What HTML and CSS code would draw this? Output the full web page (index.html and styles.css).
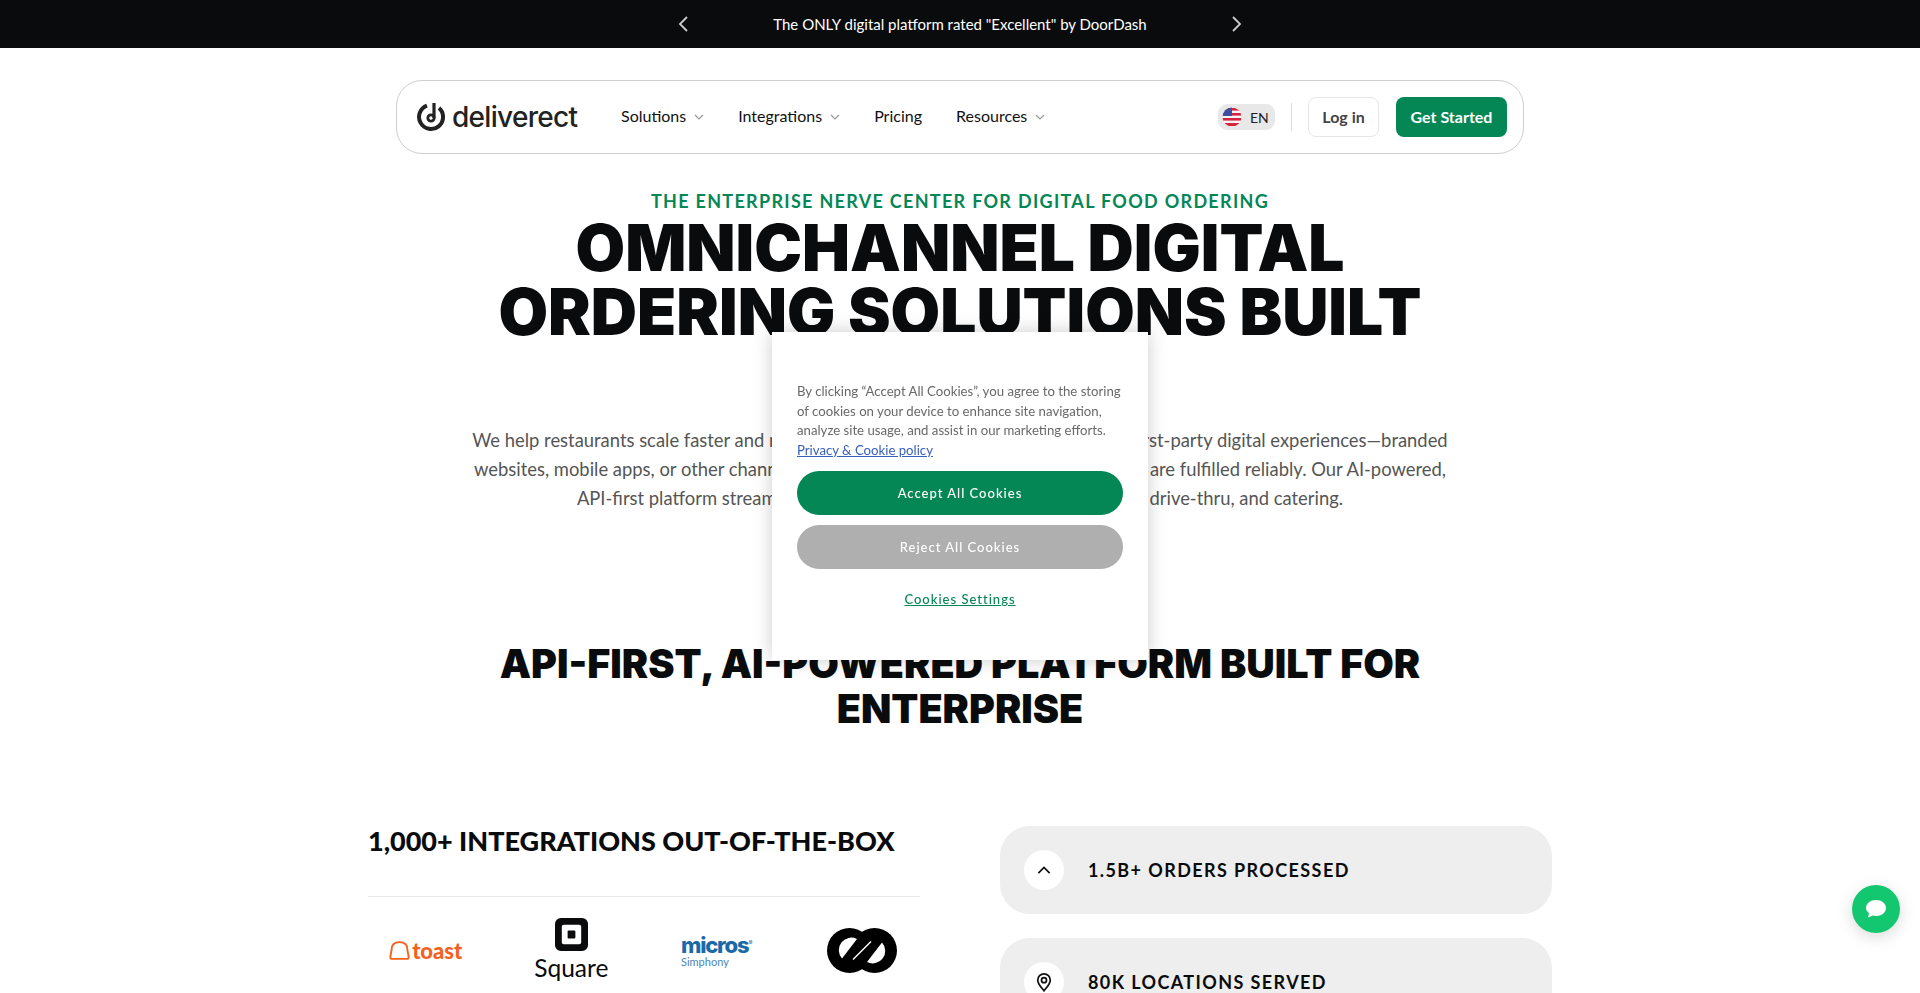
FILE: index.html
```html
<!DOCTYPE html>
<html lang="en">
<head>
    <meta charset="UTF-8">
    <meta name="viewport" content="width=device-width, initial-scale=1.0">
    <title>Deliverect</title>
    <link rel="stylesheet" href="styles.css">
</head>
<body>
    <div class="promo-bar">
        <svg class="promo-arrow" viewBox="0 0 12 16"><path d="M10 1L3 8l7 7"/></svg>
        <p class="promo-text">The ONLY digital platform rated "Excellent" by DoorDash</p>
        <svg class="promo-arrow" viewBox="0 0 12 16"><path d="M2 1l7 7-7 7"/></svg>
    </div>

    <div class="navbar">
        <a class="logo">
            <svg class="logo-mark" viewBox="0 0 28 30"><path class="logo-ring" d="M10 3.700A12 12 0 1 0 22 6"/><path class="logo-stem" d="M17 1v15"/><circle class="logo-dot" cx="14" cy="16" r="3.200"/></svg>
            <span class="logo-text">deliverect</span>
        </a>
        <div class="nav-links">
            <a class="nav-link">Solutions <svg class="caret" viewBox="0 0 10 6"><path d="M1 1l4 4 4-4"/></svg></a>
            <a class="nav-link">Integrations <svg class="caret" viewBox="0 0 10 6"><path d="M1 1l4 4 4-4"/></svg></a>
            <a class="nav-link">Pricing</a>
            <a class="nav-link">Resources <svg class="caret" viewBox="0 0 10 6"><path d="M1 1l4 4 4-4"/></svg></a>
        </div>
        <div class="nav-right">
            <div class="lang">
                <svg class="flag" viewBox="0 0 20 20">
                    <clipPath id="flag-clip"><circle cx="10" cy="10" r="9.500"/></clipPath>
                    <g clip-path="url(#flag-clip)">
                        <rect width="20" height="20" fill="#f4f4f4"/>
                        <rect y="1" width="20" height="2.600" fill="#d8233f"/>
                        <rect y="6" width="20" height="2.600" fill="#d8233f"/>
                        <rect y="11" width="20" height="2.600" fill="#d8233f"/>
                        <rect y="16" width="20" height="3" fill="#d8233f"/>
                        <rect width="10" height="9" fill="#3c4fa0"/>
                    </g>
                </svg>
                <span>EN</span>
            </div>
            <div class="nav-divider"></div>
            <a class="btn-login">Log in</a>
            <a class="btn-start">Get Started</a>
        </div>
    </div>

    <div class="hero">
        <p class="eyebrow">The enterprise nerve center for digital food ordering</p>
        <h1>OMNICHANNEL DIGITAL<br>ORDERING SOLUTIONS BUILT</h1>
        <p class="hero-copy">We help restaurants scale faster and maximize their margins by owning all of their first-party digital experiences—branded<br>websites, mobile apps, or other channels—while making sure that all of those orders are fulfilled reliably. Our AI-powered,<br>API-first platform streamlines every channel, from deliveries to dine-in, drive-thru, and catering.</p>
    </div>

    <h2 class="section-title">API-FIRST, AI-POWERED PLATFORM BUILT FOR<br>ENTERPRISE</h2>

    <div class="columns">
        <div>
            <h3 class="col-title">1,000+ INTEGRATIONS OUT-OF-THE-BOX</h3>
            <div class="partners">
                <div class="partner toast">
                    <svg class="toast-mark" viewBox="0 0 20 18"><path d="M3 17h14c1.500 0 2-1.200 1.700-2.300L17.500 8.500C18 4 15 1 10 1S2 4 2.500 8.500L1.300 14.700C1 15.800 1.500 17 3 17z"/></svg>
                    <span>toast</span>
                </div>
                <div class="partner square">
                    <svg class="square-mark" viewBox="0 0 34 34"><path fill-rule="evenodd" d="M6 0h22a6 6 0 0 1 6 6v22a6 6 0 0 1-6 6H6a6 6 0 0 1-6-6V6a6 6 0 0 1 6-6zM9 7a2 2 0 0 0-2 2v16a2 2 0 0 0 2 2h16a2 2 0 0 0 2-2V9a2 2 0 0 0-2-2z"/><rect x="13" y="13" width="8" height="8" rx="1"/></svg>
                    <span class="square-name">Square</span>
                </div>
                <div class="partner micros">
                    <span class="micros-name">micros<sup>®</sup></span>
                    <span class="micros-sub">Simphony</span>
                </div>
                <div class="partner">
                    <svg class="chain-mark" viewBox="0 0 70 45">
                        <circle cx="22.500" cy="22.500" r="22.500"/>
                        <circle cx="47.500" cy="22.500" r="22.500"/>
                        <path class="chain-hole" d="M30 11A12.500 12.500 0 0 0 15 30.500z"/>
                        <path class="chain-hole" d="M40 34A12.500 12.500 0 0 0 55 14.500z"/>
                        <path class="chain-line" d="M26 31.500L44 13.500"/>
                    </svg>
                </div>
            </div>
        </div>
        <div class="stats">
            <div class="stat">
                <span class="stat-icon"><svg viewBox="0 0 16 16"><path d="M3.500 10.500L8 6l4.500 4.500"/></svg></span>
                <span class="stat-label">1.5B+ ORDERS PROCESSED</span>
            </div>
            <div class="stat">
                <span class="stat-icon"><svg viewBox="0 0 16 16"><path d="M8 15C5.500 11.800 3 9.500 3 6.500a5 5 0 0 1 10 0C13 9.500 10.500 11.800 8 15z"/><circle cx="8" cy="6.500" r="2"/></svg></span>
                <span class="stat-label">80K LOCATIONS SERVED</span>
            </div>
        </div>
    </div>

    <div class="cookie-modal">
        <p class="cookie-text">By clicking “Accept All Cookies”, you agree to the storing of cookies on your device to enhance site navigation, analyze site usage, and assist in our marketing efforts. <a class="cookie-policy">Privacy &amp; Cookie policy</a></p>
        <a class="cookie-btn cookie-accept">Accept All Cookies</a>
        <a class="cookie-btn cookie-reject">Reject All Cookies</a>
        <a class="cookie-settings">Cookies Settings</a>
    </div>

    <a class="chat-btn">
        <svg viewBox="0 0 20 18"><path d="M10 0c5.500 0 10 3.400 10 8s-4.500 8-10 8c-1 0-2-.1-3-.4L2 17.500 3 13C1.200 11.700 0 10 0 8 0 3.400 4.500 0 10 0z"/></svg>
    </a>
</body>
</html>
```
FILE: styles.css
```css
html, body {
    height: 100%;
    overflow: hidden;
}
body {
    margin: 0;
    font-family: "Lato", "Liberation Sans", sans-serif;
    background-color: #fff;
    color: #0a0b0d;
}
p, h1, h2, h3 {
    margin: 0;
}
.promo-bar {
    height: 48px;
    background-color: #0a0b0d;
    color: #fff;
    display: flex;
    justify-content: center;
    align-items: center;
    gap: 83px;
}
.promo-text {
    width: 376px;
    text-align: center;
    font-size: 15px;
    white-space: nowrap;
}
.promo-arrow {
    width: 12px;
    height: 16px;
    fill: none;
    stroke: #ccc;
    stroke-width: 1.800;
}
.navbar {
    width: 1128px;
    height: 74px;
    margin: 32px auto 0;
    box-sizing: border-box;
    border: 1px solid #cfcfcf;
    border-radius: 26px;
    padding: 0 16px 0 20px;
    display: flex;
    align-items: center;
}
.logo {
    display: flex;
    align-items: center;
    gap: 7px;
    width: 204px;
}
.logo-mark {
    width: 28px;
    height: 30px;
    fill: none;
    stroke: #222;
}
.logo-ring {
    stroke-width: 4;
}
.logo-stem {
    stroke-width: 3.200;
}
.logo-dot {
    stroke-width: 2.800;
}
.logo-text {
    font-family: "Inter", sans-serif;
    font-size: 28px;
    font-weight: 500;
    letter-spacing: -0.7px;
    color: #222;
}
.nav-links {
    display: flex;
    align-items: center;
    gap: 34px;
    padding-bottom: 3px;
}
.nav-link {
    font-size: 16px;
    color: #111;
    display: flex;
    align-items: center;
    gap: 8px;
}
.caret {
    width: 10px;
    height: 6px;
    fill: none;
    stroke: #999;
    stroke-width: 1.200;
    margin-top: 2px;
}
.nav-right {
    margin-left: auto;
    display: flex;
    align-items: center;
}
.lang {
    width: 57px;
    height: 26px;
    box-sizing: border-box;
    background-color: #e8e8e8;
    border-radius: 9px;
    padding-left: 4px;
    display: flex;
    align-items: center;
    gap: 8px;
    font-size: 14px;
    color: #222;
}
.flag {
    width: 20px;
    height: 20px;
}
.nav-divider {
    width: 1px;
    height: 28px;
    background-color: #ddd;
    margin: 0 16px;
}
.btn-login {
    width: 71px;
    height: 40px;
    box-sizing: border-box;
    border: 1px solid #e6e6e6;
    border-radius: 8px;
    padding-bottom: 2px;
    display: flex;
    justify-content: center;
    align-items: center;
    font-size: 16px;
    font-weight: 700;
    color: #444;
}
.btn-start {
    width: 111px;
    height: 40px;
    box-sizing: border-box;
    margin-left: 17px;
    padding-bottom: 2px;
    background-color: #048755;
    border-radius: 8px;
    display: flex;
    justify-content: center;
    align-items: center;
    font-size: 16px;
    font-weight: 700;
    color: #fff;
}
.hero {
    padding-top: 35px;
    text-align: center;
}
.eyebrow {
    font-size: 18px;
    line-height: 24px;
    font-weight: 700;
    letter-spacing: 1.300px;
    text-transform: uppercase;
    color: #048755;
}
h1 {
    margin-top: 3px;
    font-family: "Inter", sans-serif;
    font-size: 64px;
    line-height: 64px;
    font-weight: 900;
    color: #0a0b0d;
}
.hero-copy {
    margin-top: 82px;
    font-size: 18.400px;
    line-height: 29px;
    color: #555;
    white-space: nowrap;
}
.section-title {
    margin-top: 129px;
    text-align: center;
    font-family: "Inter", sans-serif;
    font-size: 39.500px;
    line-height: 45px;
    font-weight: 900;
}
.columns {
    width: 1184px;
    margin: 92px auto 0;
    display: grid;
    grid-template-columns: 1fr 1fr;
    gap: 80px;
}
.col-title {
    font-size: 27px;
    line-height: 34px;
    font-weight: 900;
    padding-bottom: 38px;
    border-bottom: 1px solid #e8e8e8;
}
.partners {
    display: grid;
    grid-template-columns: repeat(4, 1fr);
    gap: 30px;
    height: 106px;
}
.partner {
    display: flex;
    justify-content: center;
    align-items: center;
}
.toast {
    gap: 2px;
    color: #f4621f;
    font-size: 22px;
    font-weight: 900;
}
.toast-mark {
    width: 21px;
    height: 19px;
    fill: none;
    stroke: #f4621f;
    stroke-width: 1.800;
}
.square {
    flex-direction: column;
    font-size: 24.500px;
    line-height: 30px;
}
.square-mark {
    width: 33px;
    height: 33px;
    fill: #0a0b0d;
}
.square-name {
    margin-top: 2px;
}
.micros {
    flex-direction: column;
    align-items: flex-start;
    padding-left: 22px;
    color: #1a6aa8;
}
.micros-name {
    font-family: "Inter", sans-serif;
    font-size: 22px;
    line-height: 20px;
    font-weight: 800;
    letter-spacing: -1.200px;
}
.micros-name sup {
    font-size: 6px;
}
.micros-sub {
    font-size: 11px;
    line-height: 11px;
    color: #4a86b8;
}
.chain-mark {
    width: 70px;
    height: 45px;
    fill: #000;
}
.chain-hole {
    fill: #fff;
}
.chain-line {
    fill: none;
    stroke: #fff;
    stroke-width: 1.500;
}
.stats {
    display: flex;
    flex-direction: column;
    gap: 24px;
    margin-top: 2px;
}
.stat {
    height: 88px;
    box-sizing: border-box;
    background-color: #eee;
    border-radius: 30px;
    padding-left: 24px;
    display: flex;
    align-items: center;
    gap: 24px;
}
.stat-icon {
    width: 40px;
    height: 40px;
    background-color: #fff;
    border-radius: 50%;
    display: flex;
    justify-content: center;
    align-items: center;
}
.stat-icon svg {
    width: 20px;
    height: 20px;
    fill: none;
    stroke: #111;
    stroke-width: 1.400;
}
.stat-label {
    font-size: 18px;
    font-weight: 700;
    letter-spacing: 1.400px;
}
.cookie-modal {
    position: fixed;
    left: 772px;
    top: 332px;
    width: 376px;
    height: 328px;
    box-sizing: border-box;
    padding: 50px 25px 0;
    background-color: #fff;
    box-shadow: 0 0 18px rgba(0, 0, 0, 0.2);
    display: flex;
    flex-direction: column;
}
.cookie-text {
    font-size: 13.200px;
    line-height: 19.500px;
    color: #696969;
}
.cookie-policy {
    display: block;
    color: #3860be;
    text-decoration: underline;
}
.cookie-btn {
    height: 44px;
    border-radius: 22px;
    display: flex;
    justify-content: center;
    align-items: center;
    font-size: 13px;
    font-weight: 500;
    letter-spacing: 1px;
    color: #fff;
}
.cookie-accept {
    margin-top: 11px;
    background-color: #048755;
}
.cookie-reject {
    margin-top: 10px;
    background-color: #afafaf;
}
.cookie-settings {
    margin-top: 22px;
    text-align: center;
    font-size: 13px;
    font-weight: 500;
    letter-spacing: 1px;
    color: #048755;
    text-decoration: underline;
}
.chat-btn {
    position: fixed;
    left: 1852px;
    top: 885px;
    width: 48px;
    height: 48px;
    background-color: #12c76f;
    border-radius: 50%;
    box-shadow: 0 4px 16px rgba(0, 0, 0, 0.15);
    display: flex;
    justify-content: center;
    align-items: center;
}
.chat-btn svg {
    width: 20px;
    height: 18px;
    fill: #fff;
}
```
